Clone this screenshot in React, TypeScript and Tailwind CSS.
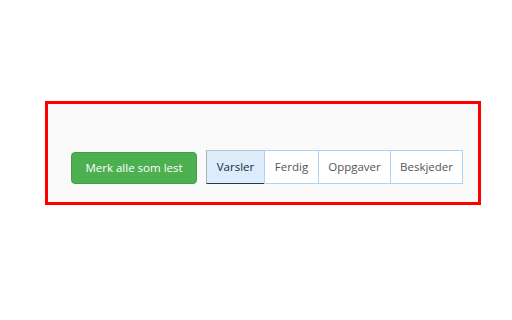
const tabs = [
  { label: "Varsler", w: "w-[59px]" },
  { label: "Ferdig", w: "w-[55px]" },
  { label: "Oppgaver", w: "w-[73px]" },
  { label: "Beskjeder", w: "w-[73px]" },
]

export default function App() {
  const active = "Varsler"

  return (
    <main className="w-[512px] h-[320px] bg-white pt-[101px] pl-[45px] font-['Open_Sans',sans-serif]">
      <section className="w-[436px] h-[104px] border-[3px] border-[#ff0000] bg-[#fafafa] flex items-end pl-[23px] pb-[18px]">
        <div className="flex items-end gap-[9px]">
          <button
            type="button"
            className="h-[32px] w-[126px] rounded-[4px] border border-[#43a047] bg-[#4caf50] text-[11.5px] text-white"
          >
            Merk alle som lest
          </button>
          <div className="flex h-[34px]" role="tablist">
            {tabs.map((t) => {
              const on = t.label === active
              return (
                <button
                  key={t.label}
                  type="button"
                  role="tab"
                  aria-selected={on}
                  className={[
                    t.w,
                    on
                      ? "h-full text-[11.5px] text-[#1b2a3a] bg-[#dcecfb] border border-t-[#b9c3cc] border-l-[#a9b2bb] border-r-[#23364d] border-b-[#23364d]"
                      : "h-full -ml-px text-[11.5px] text-[#555555] bg-white border border-[#a9d3f7]",
                  ].join(" ")}
                >
                  {t.label}
                </button>
              )
            })}
          </div>
        </div>
      </section>
    </main>
  )
}
